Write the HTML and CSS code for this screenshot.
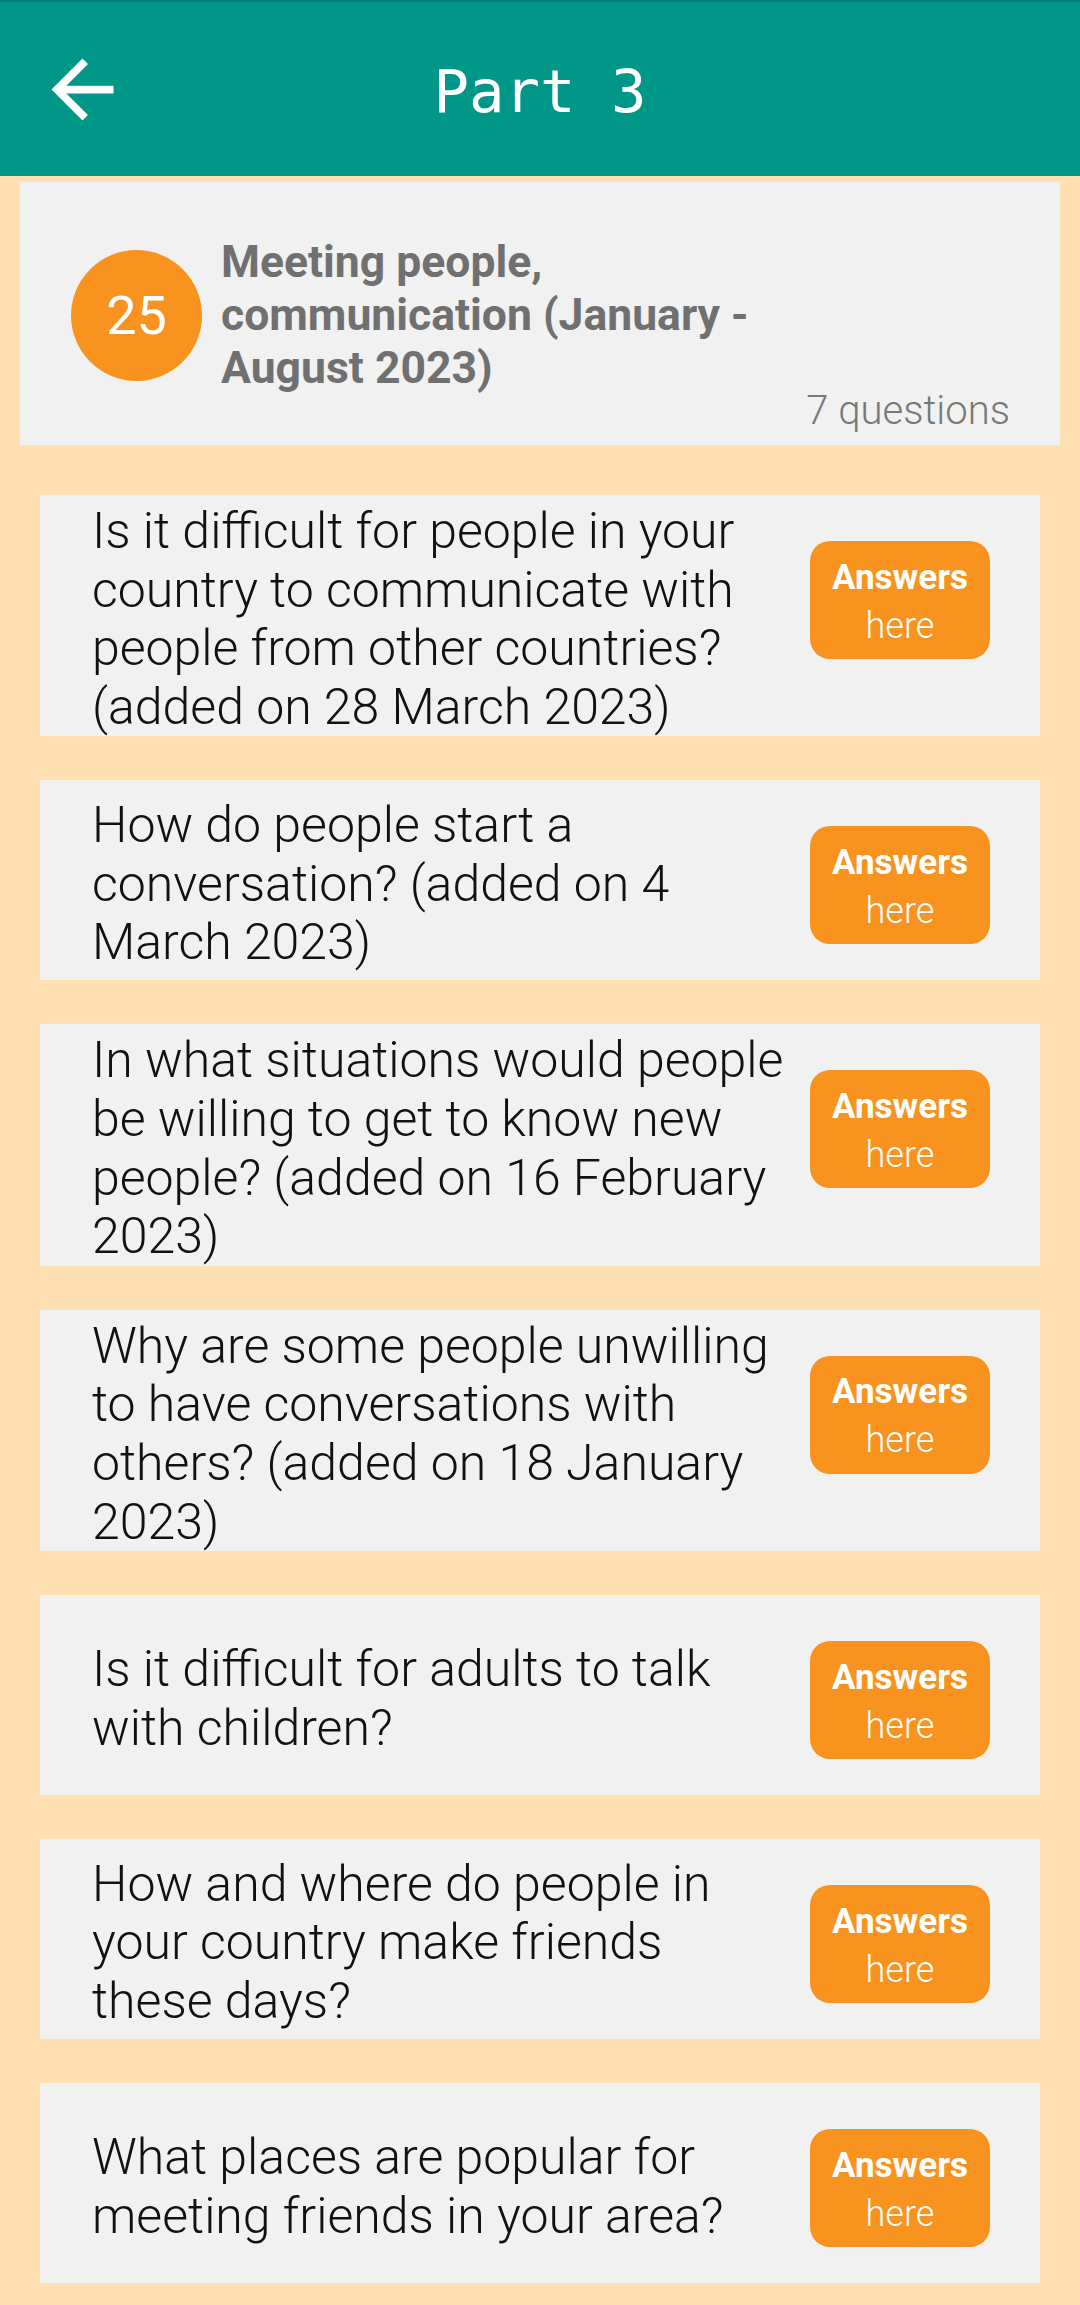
FILE: index.html
```html
<!DOCTYPE html>
<html lang="en">
<head>
<meta charset="utf-8">
<title>Part 3</title>
<link rel="stylesheet" href="styles.css">
</head>
<body>
<header class="appbar">
  <button class="back" aria-label="Back">
    <svg viewBox="0 0 24 24" width="93" height="93"><path fill="#ffffff" d="M20 11H7.83l5.59-5.59L12 4l-8 8 8 8 1.41-1.41L7.83 13H20v-2z"/></svg>
  </button>
  <h1 class="appbar-title">Part 3</h1>
</header>

<main class="content">
  <section class="topic">
    <div class="topic-row">
      <div class="topic-num">25</div>
      <h2 class="topic-title">Meeting people, communication (January - August 2023)</h2>
    </div>
    <div class="topic-count">7 questions</div>
  </section>

  <ul class="qlist">
    <li class="qcard">
      <p class="qtext">Is it difficult for people in your country to communicate with people from other countries? (added on 28 March 2023)</p>
      <a class="answers"><span class="a1">Answers</span><span class="a2">here</span></a>
    </li>
    <li class="qcard">
      <p class="qtext">How do people start a conversation? (added on 4 March 2023)</p>
      <a class="answers"><span class="a1">Answers</span><span class="a2">here</span></a>
    </li>
    <li class="qcard">
      <p class="qtext">In what situations would people be willing to get to know new people? (added on 16 February 2023)</p>
      <a class="answers"><span class="a1">Answers</span><span class="a2">here</span></a>
    </li>
    <li class="qcard">
      <p class="qtext">Why are some people unwilling to have conversations with others? (added on 18 January 2023)</p>
      <a class="answers"><span class="a1">Answers</span><span class="a2">here</span></a>
    </li>
    <li class="qcard">
      <p class="qtext">Is it difficult for adults to talk with children?</p>
      <a class="answers"><span class="a1">Answers</span><span class="a2">here</span></a>
    </li>
    <li class="qcard">
      <p class="qtext">How and where do people in your country make friends these days?</p>
      <a class="answers"><span class="a1">Answers</span><span class="a2">here</span></a>
    </li>
    <li class="qcard">
      <p class="qtext">What places are popular for meeting friends in your area?</p>
      <a class="answers"><span class="a1">Answers</span><span class="a2">here</span></a>
    </li>
  </ul>
</main>
</body>
</html>
```

FILE: styles.css
```css
html, body {
  margin: 0;
  padding: 0;
}
body {
  background: #ffe0b2;
  font-family: Roboto, "Noto Sans", "Liberation Sans", sans-serif;
  width: 1080px;
  min-height: 2305px;
}

.appbar {
  height: 174px;
  background: #009688;
  border-top: 2px solid #00806f;
  display: flex;
  align-items: center;
  justify-content: center;
  position: relative;
}
.back {
  position: absolute;
  left: 36px;
  top: 41px;
  width: 93px;
  height: 93px;
  padding: 0;
  border: 0;
  background: none;
  display: block;
}
.back svg { display: block; }
.appbar-title {
  margin: 0;
  color: #ffffff;
  font-family: "DejaVu Sans Mono", "Liberation Mono", monospace;
  font-weight: normal;
  font-size: 59px;
  line-height: 1;
  margin-top: 4px;
}

.content {
  padding: 6px 20px 0 20px;
}

.topic {
  background: #f1f1f1;
  height: 263px;
  box-sizing: border-box;
  padding: 54px 50px 0 51px;
  display: flex;
  flex-direction: column;
}
.topic-row {
  display: flex;
  align-items: center;
  gap: 19px;
}
.topic-num {
  flex: none;
  width: 131px;
  height: 131px;
  border-radius: 50%;
  background: #f7931e;
  color: #ffffff;
  font-size: 54px;
  display: flex;
  align-items: center;
  justify-content: center;
}
.topic-title {
  margin: 0;
  color: #707070;
  font-size: 44.5px;
  font-weight: 700;
  line-height: 53px;
  width: 580px;
}
.topic-count {
  margin-top: -6px;
  text-align: right;
  color: #787878;
  font-size: 40px;
  font-weight: 300;
  line-height: 44px;
}

.qlist {
  list-style: none;
  margin: 50px 0 0 0;
  padding: 0;
  display: flex;
  flex-direction: column;
  gap: 44px;
}
.qcard {
  margin: 0 0 0 20px;
  width: 1000px;
  box-sizing: border-box;
  min-height: 200px;
  background: #f1f1f1;
  padding: 7px 50px 0 52px;
  display: flex;
  align-items: center;
  gap: 15px;
}
.qtext {
  flex: 1;
  margin: 0;
  color: #111111;
  font-size: 50px;
  font-weight: 300;
  line-height: 58.6px;
}
.answers {
  align-self: flex-start;
  margin-top: 39px;
  flex: none;
  width: 180px;
  height: 118px;
  border-radius: 20px;
  background: #f7931e;
  color: #ffffff;
  display: flex;
  flex-direction: column;
  justify-content: center;
  align-items: center;
  padding-top: 3px;
  box-sizing: border-box;
}
.a1 {
  font-size: 35px;
  font-weight: 700;
  line-height: 48px;
}
.a2 {
  font-size: 36px;
  font-weight: 300;
  line-height: 48px;
}
```
